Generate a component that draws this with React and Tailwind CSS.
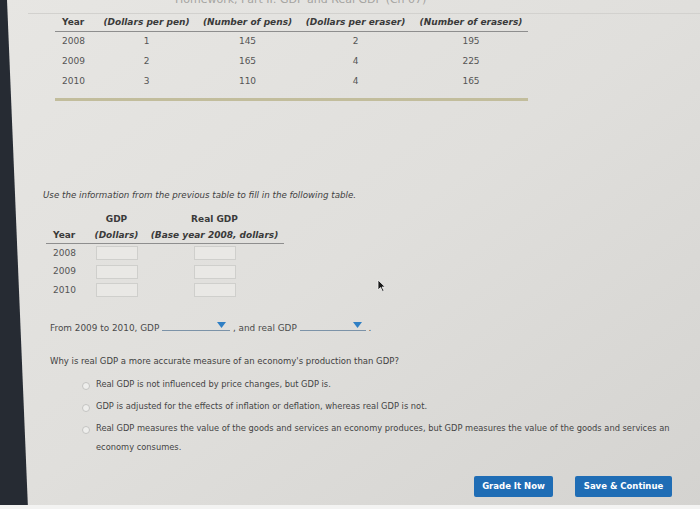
import { useState } from "react";

const pens = [
  { year: 2008, penPrice: 1, pens: 145, eraserPrice: 2, erasers: 195 },
  { year: 2009, penPrice: 2, pens: 165, eraserPrice: 4, erasers: 225 },
  { year: 2010, penPrice: 3, pens: 110, eraserPrice: 4, erasers: 165 },
];

const options = [
  "Real GDP is not influenced by price changes, but GDP is.",
  "GDP is adjusted for the effects of inflation or deflation, whereas real GDP is not.",
  "Real GDP measures the value of the goods and services an economy produces, but GDP measures the value of the goods and services an economy consumes.",
];

const Dropdown = ({ width }) => (
  <span
    className="relative inline-block h-[11px] border-b border-[#7c93a8] align-baseline"
    style={{ width }}
  >
    <svg className="absolute right-[4px] top-[2px]" width="9" height="6" viewBox="0 0 9 6">
      <path d="M0 0 H9 L4.5 6 Z" fill="#2f7fc4" />
    </svg>
  </span>
);

const Cursor = () => (
  <svg className="absolute left-[377px] top-[279px]" width="9" height="13" viewBox="0 0 9 13">
    <path d="M1 1 L1 11 L3.5 8.5 L5.5 12.5 L7 11.8 L5 8 L8.2 8 Z" fill="#1a1a1a" stroke="#f2f2f2" strokeWidth="0.8" />
  </svg>
);

export default function App() {
  const [picked, setPicked] = useState(null);

  return (
    <div className="relative flex h-[509px] w-[700px] overflow-hidden bg-gradient-to-br from-[#e7e6e3] via-[#e0dfdc] to-[#d4d3d0] font-['DejaVu_Sans',sans-serif] text-[#555]">
      {/* dark edge of the monitor */}
      <div className="w-[28px] shrink-0 bg-[#262b33] [clip-path:polygon(0_0,25%_0,100%_100%,0_100%)]" />

      <div className="flex-1 flex flex-col">
        {/* page title, mostly scrolled out of view */}
        <div className="h-[14px] overflow-hidden border-b border-[#d2d1ce]">
          <div className="-mt-[8px] ml-[147px] text-[11px] text-[#a5a4a1]">
            Homework, Part II: GDP and Real GDP (Ch 07)
          </div>
        </div>

        {/* Given data table */}
        <div className="ml-[27px] w-[473px] text-[9px]">
          <div className="grid h-[18px] grid-cols-[40px_103px_99px_117px_114px] items-center border-b border-[#8e8e8e] font-bold text-[#3a3a3a]">
            <span className="pl-[7px]">Year</span>
            <span className="text-center italic">(Dollars per pen)</span>
            <span className="text-center italic">(Number of pens)</span>
            <span className="text-center italic">(Dollars per eraser)</span>
            <span className="text-center italic">(Number of erasers)</span>
          </div>
          {pens.map((row) => (
            <div
              key={row.year}
              className="grid h-[20px] grid-cols-[40px_103px_99px_117px_114px] items-center"
            >
              <span className="pl-[7px]">{row.year}</span>
              <span className="text-center">{row.penPrice}</span>
              <span className="text-center">{row.pens}</span>
              <span className="text-center">{row.eraserPrice}</span>
              <span className="text-center">{row.erasers}</span>
            </div>
          ))}
          <div className="mt-[6px] h-[3px] bg-[#c2bd9c]" />
        </div>

        <p className="ml-[15px] mt-[88px] text-[8.7px] italic text-[#3f3f3f]">
          Use the information from the previous table to fill in the following table.
        </p>

        {/* Table to fill in */}
        <div className="ml-[18px] mt-[11px] w-[238px] text-[9px]">
          <div className="grid grid-cols-[42px_57px_139px] border-b border-[#8e8e8e] pb-[1px] font-bold text-[#3a3a3a]">
            <span />
            <span className="text-center">GDP</span>
            <span className="text-center">Real GDP</span>
            <span className="mt-[2px] pl-[7px]">Year</span>
            <span className="mt-[2px] text-center italic">(Dollars)</span>
            <span className="mt-[2px] text-center italic">(Base year 2008, dollars)</span>
          </div>
          {pens.map((row) => (
            <div key={row.year} className="grid h-[18.5px] grid-cols-[42px_57px_139px] items-center">
              <span className="pl-[7px]">{row.year}</span>
              <span className="flex justify-center">
                <span className="h-[14px] w-[42px] border border-[#cfcfcc] bg-[#e9e8e5]" />
              </span>
              <span className="flex justify-center">
                <span className="h-[14px] w-[42px] border border-[#cfcfcc] bg-[#e9e8e5]" />
              </span>
            </div>
          ))}
        </div>

        <p className="ml-[22px] mt-[20px] text-[8.9px] text-[#4a4a4a]">
          From 2009 to 2010, GDP <Dropdown width="68px" /> , and real GDP <Dropdown width="66px" /> .
        </p>

        <p className="ml-[22px] mt-[20px] text-[8.5px] text-[#3f3f3f]">
          Why is real GDP a more accurate measure of an economy's production than GDP?
        </p>

        <div className="ml-[54px] mt-[13px] flex flex-col gap-[9px] text-[8.3px] text-[#444]">
          {options.map((text, i) => (
            <label key={i} className="flex cursor-pointer items-start gap-[6px] pr-[24px]" onClick={() => setPicked(i)}>
              <span
                className={`mt-[1px] h-[8px] w-[8px] shrink-0 rounded-full border border-[#c4c4c2] ${
                  picked === i ? "bg-[#2f7fc4]" : "bg-[#eeeeec]"
                }`}
              />
              <span className="leading-[19px] -mt-[6px]">{text}</span>
            </label>
          ))}
        </div>

        <div className="mt-auto mb-[12px] flex justify-end gap-[22px] pr-[28px]">
          <button className="h-[21px] w-[79px] rounded-[2px] bg-[#1f6db5] text-[8.5px] font-bold text-white">
            Grade It Now
          </button>
          <button className="h-[21px] w-[97px] rounded-[2px] bg-[#1f6db5] text-[8.5px] font-bold text-white">
            Save &amp; Continue
          </button>
        </div>
      </div>

      <Cursor />
      <div className="absolute bottom-0 left-0 h-[4px] w-full bg-[#f3f3f2]" />
    </div>
  );
}
